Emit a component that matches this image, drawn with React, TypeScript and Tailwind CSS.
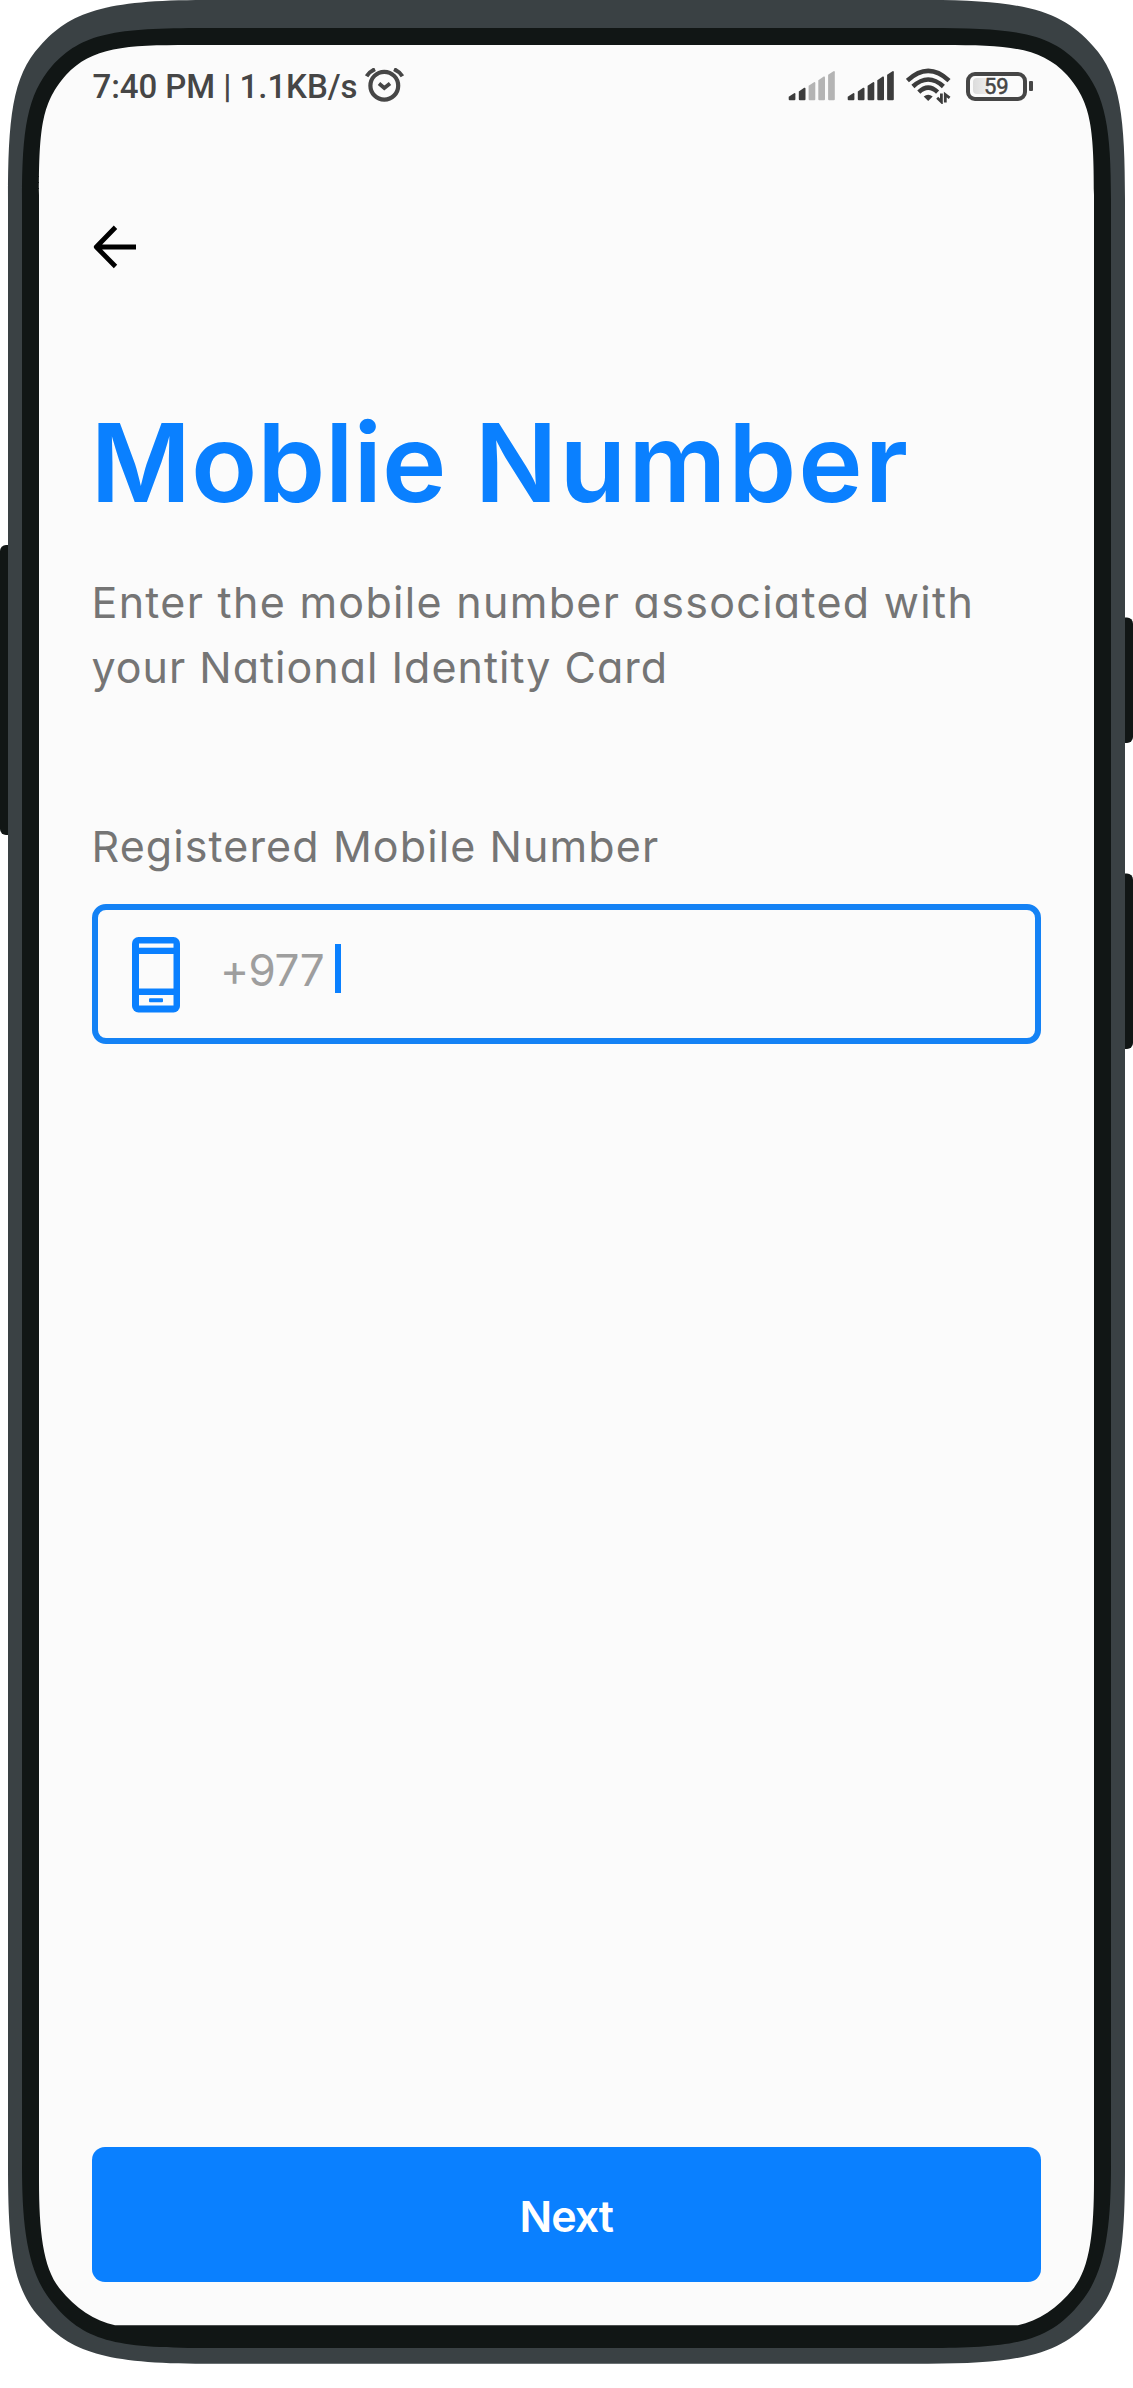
import React from "react";

function PhoneFrame() {
  return (
    <svg
      className="pointer-events-none absolute inset-0"
      width="1133"
      height="2388"
      viewBox="0 0 1133 2388"
      aria-hidden="true"
    >
      <rect x="0" y="545" width="30" height="290" rx="6" fill="#111615" />
      <rect x="1103" y="617.5" width="30" height="125.5" rx="6" fill="#111615" />
      <rect x="1103" y="873.5" width="30" height="175.5" rx="6" fill="#111615" />
      <path
        fill="#3a4144"
        d="M8 200C8 120 12 76 40 46C70 12 105 0 205 0H928C1028 0 1063 12 1093 46C1121 76 1125 120 1125 200V2163.7C1125 2243.7 1121 2287.7 1093 2317.7C1063 2351.7 1028 2363.7 928 2363.7H205C105 2363.7 70 2351.7 40 2317.7C12 2287.7 8 2243.7 8 2163.7Z"
      />
      <path
        fill="#111615"
        d="M22 200C22 130 27 95 52 66C82 33 115 28 205 28H928C1018 28 1051 33 1081 66C1106 95 1111 130 1111 200V2165C1111 2225 1106 2272 1081 2302C1050 2341 1018 2348 928 2348H205C115 2348 83 2341 52 2302C27 2272 22 2225 22 2165Z"
      />
      <path
        fill="#fbfbfb"
        d="M39 195C39 125 42.5 102 66 75C92 47 125 45 190 45H943C1008 45 1041 47 1067 75C1090.500 102 1094 125 1094 195V2180C1094 2232 1090 2268 1073 2289C1058 2308 1038 2321 1018 2325.300H115C95 2321 75 2308 60 2289C43 2268 39 2232 39 2180Z"
      />
    </svg>
  );
}

function AlarmIcon() {
  return (
    <svg width="42" height="36" viewBox="0 0 42 36" fill="none" stroke="#464646">
      <circle cx="20.300" cy="17.700" r="13.900" strokeWidth="4.200" />
      <path d="M15 15.500L20.300 20L26 15.500" strokeWidth="3.800" />
      <path d="M2.600 8.200Q5.500 3.600 11 1.200M30 1.200Q35.500 3.600 38.400 8.200" strokeWidth="4" />
    </svg>
  );
}

const BARS = [
  { x: 0.7, top: 25.2 },
  { x: 10.8, top: 19.8 },
  { x: 20.6, top: 14.2 },
  { x: 30.3, top: 8.6 },
  { x: 40.1, top: 3.2 },
];

function SignalIcon({ level }: { level: number }) {
  return (
    <svg width="47" height="36" viewBox="0 0 47 36">
      {BARS.map((b, i) => (
        <path
          key={b.x}
          d={`M${b.x} ${b.top + 3.6}L${b.x + 5.4} ${b.top}Q${b.x + 6.7} ${b.top - 0.6} ${b.x + 6.7} ${b.top + 1}V31.2Q${b.x + 6.7} 32.2 ${b.x + 5.7} 32.2H${b.x + 1}Q${b.x} 32.2 ${b.x} 31.2Z`}
          fill={i < level ? "#3c3c3c" : "#b4b4b4"}
        />
      ))}
    </svg>
  );
}

function WifiIcon() {
  return (
    <svg width="47" height="36" viewBox="0 0 47 36" fill="none" stroke="#3c3c3c" strokeWidth="4.500">
      <path d="M1.400 12.600Q22.200 -6.800 43 12.600" />
      <path d="M6.900 18.500Q22.200 4.500 37.400 18.500" />
      <path d="M12.800 24.200Q22.200 15.200 31.600 24.200" />
      <path d="M17.700 28.600Q22.200 24.800 26.700 28.600L22.200 33Z" fill="#3c3c3c" stroke="none" />
      <path d="M35.400 25.500V33.800L31.200 29.800M39.300 34.600V26.500L43.600 29.800" strokeWidth="2.800" />
    </svg>
  );
}

function Battery() {
  return (
    <div className="flex items-center gap-0.5">
      <div className="flex h-[29px] w-[61px] items-center rounded-[9px] border-[4px] border-[#464646] px-[3px]">
        <div className="h-4 w-4 shrink-0 rounded-l-sm bg-linear-to-r from-[#dcdcdc] to-[#eeeeee]" />
        <span className="-ml-[5px] pt-px text-[22px] leading-[22px] text-[#464646] [-webkit-text-stroke:0.500px_#464646]">
          59
        </span>
      </div>
      <div className="h-[10px] w-[4px] rounded-[1px] bg-[#464646]" />
    </div>
  );
}

function StatusBar() {
  return (
    <header className="flex h-9 items-center justify-between pr-[8px] font-['Roboto',sans-serif]">
      <div className="flex items-center">
        <span className="w-[272px] pt-px pl-px text-[33px] leading-9 font-medium tracking-[-0.060px] whitespace-nowrap text-[#464646]">
          7:40 PM | 1.1KB/s
        </span>
        <AlarmIcon />
      </div>
      <div className="flex items-center">
        <SignalIcon level={2} />
        <div className="ml-3">
          <SignalIcon level={5} />
        </div>
        <div className="ml-3">
          <WifiIcon />
        </div>
        <div className="ml-[13px]">
          <Battery />
        </div>
      </div>
    </header>
  );
}

function BackArrow() {
  return (
    <svg width="48" height="48" viewBox="0 0 48 48" fill="none" stroke="#000" strokeWidth="4.800">
      <path d="M24.500 5.300L5.300 25L24.500 44.500M5.300 25H45" strokeLinejoin="round" />
    </svg>
  );
}

function MobileIcon() {
  return (
    <svg width="48" height="76" viewBox="0 0 48 76">
      <rect width="48" height="75.500" rx="6.500" fill="#0a80ff" />
      <g fill="#fbfbfb">
        <rect x="7" y="6.500" width="34.500" height="4.200" />
        <rect x="7" y="17" width="34.500" height="34.500" />
        <rect x="7" y="58" width="34.500" height="10.500" />
      </g>
      <rect x="17" y="61.300" width="14" height="4" rx="1" fill="#0a80ff" />
    </svg>
  );
}

export default function App() {
  return (
    <div className="relative h-[2388px] w-[1133px] overflow-hidden bg-white">
      <PhoneFrame />
      <div className="relative flex h-[2282px] flex-col pt-[68px] pr-[92px] pl-[91.500px] font-['Inter',sans-serif] [font-feature-settings:'cv11']">
        <StatusBar />
        <button className="mt-[118px] -ml-px self-start" aria-label="Back">
          <BackArrow />
        </button>
        <h1 className="mt-[132px] -ml-px text-[109px] leading-[120px] font-semibold whitespace-nowrap text-[#0a80ff]">
          <span className="tracking-[-0.100px]">Moblie </span>
          <span className="ml-px tracking-[2px]">Number</span>
        </h1>
        <p className="mt-[48px] text-[43px] leading-[64.500px] whitespace-nowrap text-[#757575]">
          <span className="tracking-[1.300px]">Enter the mobile number associated with</span>
          <br />
          <span className="tracking-[1px]">your National Identity Card</span>
        </p>
        <label className="mt-[115px] text-[43px] leading-[64px] tracking-[1.100px] text-[#757575]">
          Registered Mobile Number
        </label>
        <div className="mt-[26px] flex h-[140px] items-center rounded-[14px] border-[6px] border-[#1482f5] pt-px pl-[34.500px]">
          <MobileIcon />
          <span className="mb-[9px] ml-[40px] text-[44px] leading-[60px] tracking-[-0.500px] text-[#9e9e9e]">
            +977
          </span>
          <span className="mb-[12px] ml-[11px] h-[49px] w-[6px] bg-[#0a80ff]" />
        </div>
        <button className="mt-auto flex h-[135px] w-full items-center justify-center rounded-[13px] bg-[#0a80ff] pt-[3px] text-[43px] font-semibold tracking-[-1px] text-white">
          Next
        </button>
      </div>
    </div>
  );
}
